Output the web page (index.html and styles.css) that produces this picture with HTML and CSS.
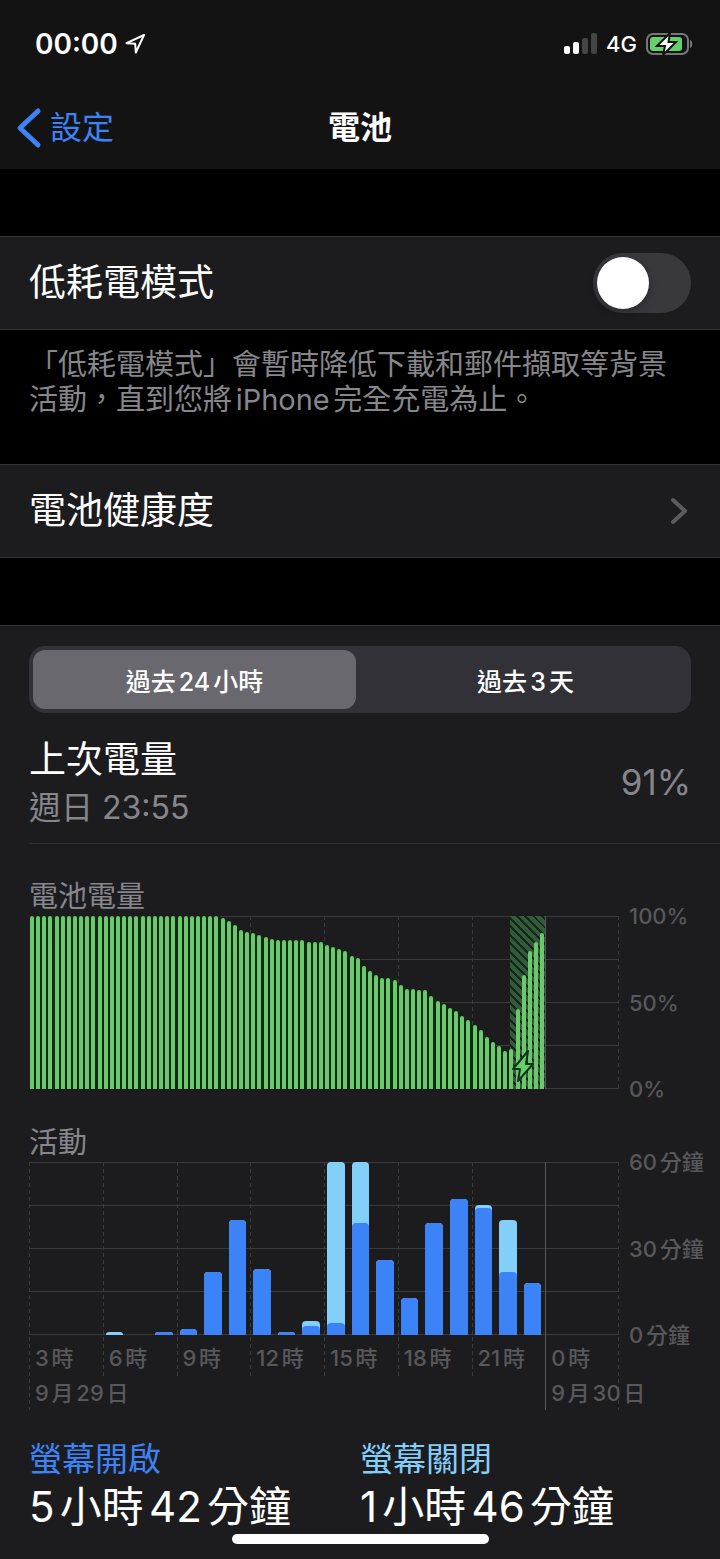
FILE: index.html
```html
<!DOCTYPE html>
<html lang="zh-Hant">
<head>
  <meta charset="UTF-8">
  <meta name="viewport" content="width=device-width, initial-scale=1">
  <title>電池</title>
  <link rel="stylesheet" href="styles.css">
</head>
<body>
  <header class="top">
    <div class="status-bar">
      <div class="status-left">
        <span class="clock">00:00</span>
        <svg width="22" height="22" viewBox="0 0 22 22" fill="none" stroke="#fff" stroke-width="2" stroke-linejoin="round">
          <path d="M20 2L2.500 10.200L11.200 10.800L11.800 19.500Z"/>
        </svg>
      </div>
      <div class="status-right">
        <svg width="33" height="22" viewBox="0 0 33 22">
          <rect x="0" y="13" width="6" height="8" rx="2" fill="#fff"/>
          <rect x="9" y="9" width="6" height="12" rx="2" fill="#fff"/>
          <rect x="18" y="5" width="6" height="16" rx="2" fill="#444"/>
          <rect x="27" y="0" width="6" height="21" rx="2" fill="#444"/>
        </svg>
        <span class="network">4G</span>
        <svg width="48" height="24" viewBox="0 0 48 24">
          <rect x="1" y="2" width="41" height="20" rx="6" fill="none" stroke="#77777a" stroke-width="2"/>
          <rect x="4" y="5" width="32" height="14" rx="3" fill="#65d069"/>
          <path d="M44 8c3 1 3 7 0 8z" fill="#77777a"/>
          <path d="M24 1L11 14H19L17 23L30 10H22.500Z" fill="#fff" stroke="#131313" stroke-width="2"/>
        </svg>
      </div>
    </div>
    <nav class="nav-bar">
      <a class="back" href="#">
        <svg width="26" height="42" viewBox="0 0 26 42" fill="none" stroke="#3c83f7" stroke-width="5" stroke-linecap="round" stroke-linejoin="round">
          <path d="M22 4L4 21L22 38"/>
        </svg>
        設定
      </a>
      <h1>電池</h1>
    </nav>
  </header>

  <main>
    <section class="group">
      <div class="row">
        <label for="lowPower">低耗電模式</label>
        <input class="switch" type="checkbox" role="switch" id="lowPower">
      </div>
    </section>
    <p class="note">「低耗電模式」會暫時降低下載和郵件擷取等背景活動，直到您將iPhone完全充電為止。</p>

    <section class="group">
      <a class="row" href="#">
        電池健康度
        <svg class="chevron" width="18" height="28" viewBox="0 0 18 28" fill="none" stroke="#5b5b5f" stroke-width="4" stroke-linecap="round" stroke-linejoin="round">
          <path d="M3 3L15 14L3 25"/>
        </svg>
      </a>
    </section>

    <section class="usage">
      <div class="segmented">
        <button class="segment active" type="button">過去24小時</button>
        <button class="segment" type="button">過去3天</button>
      </div>

      <div class="last-charge">
        <div class="last-time">
          <h2>上次電量</h2>
          <p>週日 23:55</p>
        </div>
        <span class="percent">91%</span>
      </div>

      <h3>電池電量</h3>
      <div class="chart">
        <div class="plot">
          <div class="lines"><i></i><i></i><i></i><i></i></div>
          <div class="hours">
            <div></div><div></div><div></div><div></div><div></div><div></div><div></div><div class="midnight"></div>
          </div>
          <div class="charging"></div>
          <div class="levels" id="levels"></div>
          <svg class="bolt" width="24" height="34" viewBox="0 0 24 34" fill="#65d069" stroke="#12301a" stroke-width="2" stroke-linejoin="round">
            <path d="M17 2L2 20H9L7 32L22 15H15Z"/>
          </svg>
        </div>
        <div class="scale"><span>100%</span><span>50%</span><span>0%</span></div>
      </div>

      <h3>活動</h3>
      <div class="chart activity">
        <div class="plot">
          <div class="lines"><i></i><i></i><i></i><i></i></div>
          <div class="hours">
            <div class="day">3時<br>9月29日</div>
            <div>6時</div>
            <div>9時</div>
            <div>12時</div>
            <div>15時</div>
            <div>18時</div>
            <div>21時</div>
            <div class="day midnight">0時<br>9月30日</div>
          </div>
          <div class="minutes" id="minutes"></div>
        </div>
        <div class="scale"><span>60分鐘</span><span>30分鐘</span><span>0分鐘</span></div>
      </div>

      <div class="totals">
        <div>
          <h4 class="on">螢幕開啟</h4>
          <p>5小時42分鐘</p>
        </div>
        <div>
          <h4 class="off">螢幕關閉</h4>
          <p>1小時46分鐘</p>
        </div>
      </div>
    </section>
  </main>

  <div class="home-bar"></div>

  <script src="script.js"></script>
</body>
</html>
```

FILE: styles.css
```css
* {
  box-sizing: border-box;
}

body {
  margin: 0;
  background: #000;
  color: #fff;
  font-family: Inter, "Noto Sans CJK TC", sans-serif;
  font-size: 37px;
  line-height: 48px;
  text-autospace: normal;
}

h1, h2, h3, h4, p {
  margin: 0;
  font-weight: 400;
}

a {
  color: inherit;
  text-decoration: none;
}

svg {
  display: block;
  flex: none;
}

/* status bar + navigation */

.top {
  height: 169px;
  background: #131313;
}

.status-bar {
  display: flex;
  justify-content: space-between;
  align-items: center;
  height: 88px;
  padding: 0 26px 0 35px;
}

.status-left,
.status-right {
  display: flex;
  align-items: center;
  gap: 6px;
}

.status-right {
  gap: 9px;
}

.clock {
  font-size: 28px;
  font-weight: 600;
}

.network {
  font-size: 22px;
  font-weight: 500;
}

.nav-bar {
  display: grid;
  grid-template-columns: 1fr auto 1fr;
  align-items: center;
  height: 80px;
  padding: 0 16px;
}

.back {
  display: flex;
  align-items: center;
  gap: 8px;
  color: #3c83f7;
  font-size: 32px;
}

h1 {
  font-size: 32px;
  font-weight: 600;
}

/* settings rows */

.group {
  margin-top: 67px;
  background: #1c1c1e;
  border-top: 1px solid #343437;
  border-bottom: 1px solid #343437;
}

.row {
  display: flex;
  justify-content: space-between;
  align-items: center;
  height: 92px;
  padding: 0 29px;
}

.row .chevron {
  margin-right: 3px;
}

.switch {
  appearance: none;
  width: 98px;
  height: 60px;
  margin: 0;
  padding: 4px;
  border-radius: 30px;
  background: #39383d;
}

.switch::before {
  content: "";
  display: block;
  width: 52px;
  height: 52px;
  border-radius: 50%;
  background: #fff;
  box-shadow: 0 3px 8px rgba(0, 0, 0, 0.3);
}

.switch:checked {
  background: #65d069;
}

.switch:checked::before {
  margin-left: auto;
}

.note {
  padding: 17px 29px 0;
  color: #86868b;
  font-size: 29px;
  line-height: 35px;
}

.note + .group {
  margin-top: 47px;
}

/* usage */

.usage {
  margin-top: 67px;
  padding: 20px 0 28px 29px;
  background: #1c1c1e;
  border-top: 1px solid #343437;
}

.segmented {
  display: flex;
  gap: 8px;
  height: 67px;
  margin-right: 29px;
  padding: 4px;
  border-radius: 16px;
  background: #323137;
}

.segment {
  flex: 1;
  padding: 0;
  border: 0;
  border-radius: 12px;
  background: none;
  color: #fff;
  font-family: inherit;
  font-size: 25px;
  font-weight: 500;
  text-autospace: normal;
}

.segment.active {
  background: #69686e;
}

.last-charge {
  display: flex;
  justify-content: space-between;
  align-items: center;
  height: 131px;
  padding: 8px 29px 0 0;
  border-bottom: 1px solid #303033;
  color: #86868b;
}

.last-time {
  padding-top: 4px;
}

.last-charge h2 {
  font-size: 37px;
  color: #fff;
}

.last-charge p {
  font-size: 32px;
}

.percent {
  font-size: 35px;
}

h3 {
  color: #86868b;
  font-size: 29px;
  line-height: 38px;
}

.last-charge + h3,
.chart + h3 {
  margin-top: 34px;
}

/* charts */

.chart {
  display: grid;
  grid-template-columns: 1fr 101px;
  color: #58585c;
  font-size: 22px;
  font-weight: 500;
  line-height: 35px;
}

/* every layer of a plot shares one grid cell */
.plot {
  display: grid;
  grid-template-rows: 173px;
}

.plot > * {
  grid-area: 1 / 1;
}

.lines {
  display: grid;
  grid-template-rows: repeat(4, 1fr);
  border-bottom: 1px solid #3a3a3d;
}

.lines i {
  border-top: 1px solid #3a3a3d;
}

.hours {
  display: grid;
  grid-template-columns: repeat(8, minmax(0, 1fr));
  background: repeating-linear-gradient(#3a3a3d 0 4px, transparent 4px 7px) no-repeat right / 1px 100%;
}

.hours div {
  background: repeating-linear-gradient(#3a3a3d 0 4px, transparent 4px 7px) no-repeat left / 1px 100%;
  white-space: nowrap;
}

.hours .midnight {
  background: linear-gradient(#57575b, #57575b) no-repeat left / 1px 100%;
}

.activity .plot {
  grid-template-rows: 173px 75px;
}

.activity .hours {
  grid-row: 1 / 3;
  align-items: start;
}

.activity .hours div {
  height: 216px;
  padding: 179px 0 0 6px;
}

.activity .hours .day {
  height: 248px;
}

.levels {
  display: grid;
  grid-template-columns: repeat(84, 1fr);
  align-items: end;
  width: 87.5%;
}

.level {
  height: 100%;
  padding-left: 1px;
  background: #0c2b12;
}

.level.plugged {
  background: none;
}

.level::before {
  content: "";
  display: block;
  width: 4px;
  height: 100%;
  border-radius: 2px 2px 0 0;
  background: #6cc76d;
}

.charging {
  justify-self: end;
  width: 35px;
  margin-right: 12.5%;
  background: repeating-linear-gradient(45deg, #14261a 0 2px, #315b39 2px 6px);
}

.bolt {
  align-self: end;
  justify-self: end;
  margin: 0 calc(12.5% + 10px) 6px 0;
}

.minutes {
  display: grid;
  grid-template-columns: repeat(21, 1fr);
  align-items: end;
  width: 87.5%;
  height: 173px;
}

.hour {
  display: flex;
  align-items: end;
  margin: 0 4px 0 3px;
  border-radius: 4px 4px 0 0;
  background: #84cffa;
  overflow: hidden;
}

.screen-on {
  width: 100%;
  border-radius: 4px 4px 0 0;
  background: #3c83f7;
}

.scale {
  display: flex;
  flex-direction: column;
  justify-content: space-between;
  height: 208px;
  margin: -17px 0;
  padding-left: 10px;
}

/* totals */

.totals {
  display: grid;
  grid-template-columns: 1fr 1fr;
  margin: 25px 29px 0 0;
}

.totals h4 {
  font-size: 33px;
}

.totals p {
  font-size: 42px;
}

.on {
  color: #3c83f7;
}

.off {
  color: #84cffa;
}

.home-bar {
  position: fixed;
  bottom: 15px;
  left: 50%;
  width: 257px;
  height: 10px;
  margin-left: -128px;
  border-radius: 5px;
  background: #fff;
}
```

FILE: script.js
```js
// battery level every 15 minutes, in percent
const levels = [
  ...Array(31).fill(100),
  99, 97, 95, 92, 91, 90, 89, 88, 87, 86, 86, 86, 86, 86, 85, 85, 85,
  83, 82, 81, 80, 77, 76, 71, 68, 66, 64, 64, 63, 60, 58, 58, 57, 57,
  54, 51, 49, 47, 45, 42, 40, 37, 34, 30, 27, 25, 22,
  23, 46, 66, 80, 85, 90
]
const pluggedAt = 78

// [minutes with screen on, minutes in total] for each hour from 3:00
const hours = [
  [0, 0], [0, 0], [0, 0], [0, 1], [0, 0], [1, 1], [2, 2],
  [22, 22], [40, 40], [23, 23], [1, 1], [3, 5], [4, 60], [39, 60],
  [26, 26], [13, 13], [39, 39], [47, 47], [44, 45], [22, 40], [18, 18]
]

const levelBox = document.getElementById("levels")
levels.forEach((value, i) => {
  const bar = document.createElement("div")
  bar.className = i < pluggedAt ? "level" : "level plugged"
  bar.style.height = value + "%"
  levelBox.appendChild(bar)
})

const minuteBox = document.getElementById("minutes")
hours.forEach(([on, total]) => {
  const bar = document.createElement("div")
  bar.className = "hour"
  bar.style.height = total / 60 * 100 + "%"
  const part = document.createElement("div")
  part.className = "screen-on"
  part.style.height = total ? on / total * 100 + "%" : "0"
  bar.appendChild(part)
  minuteBox.appendChild(bar)
})
```
